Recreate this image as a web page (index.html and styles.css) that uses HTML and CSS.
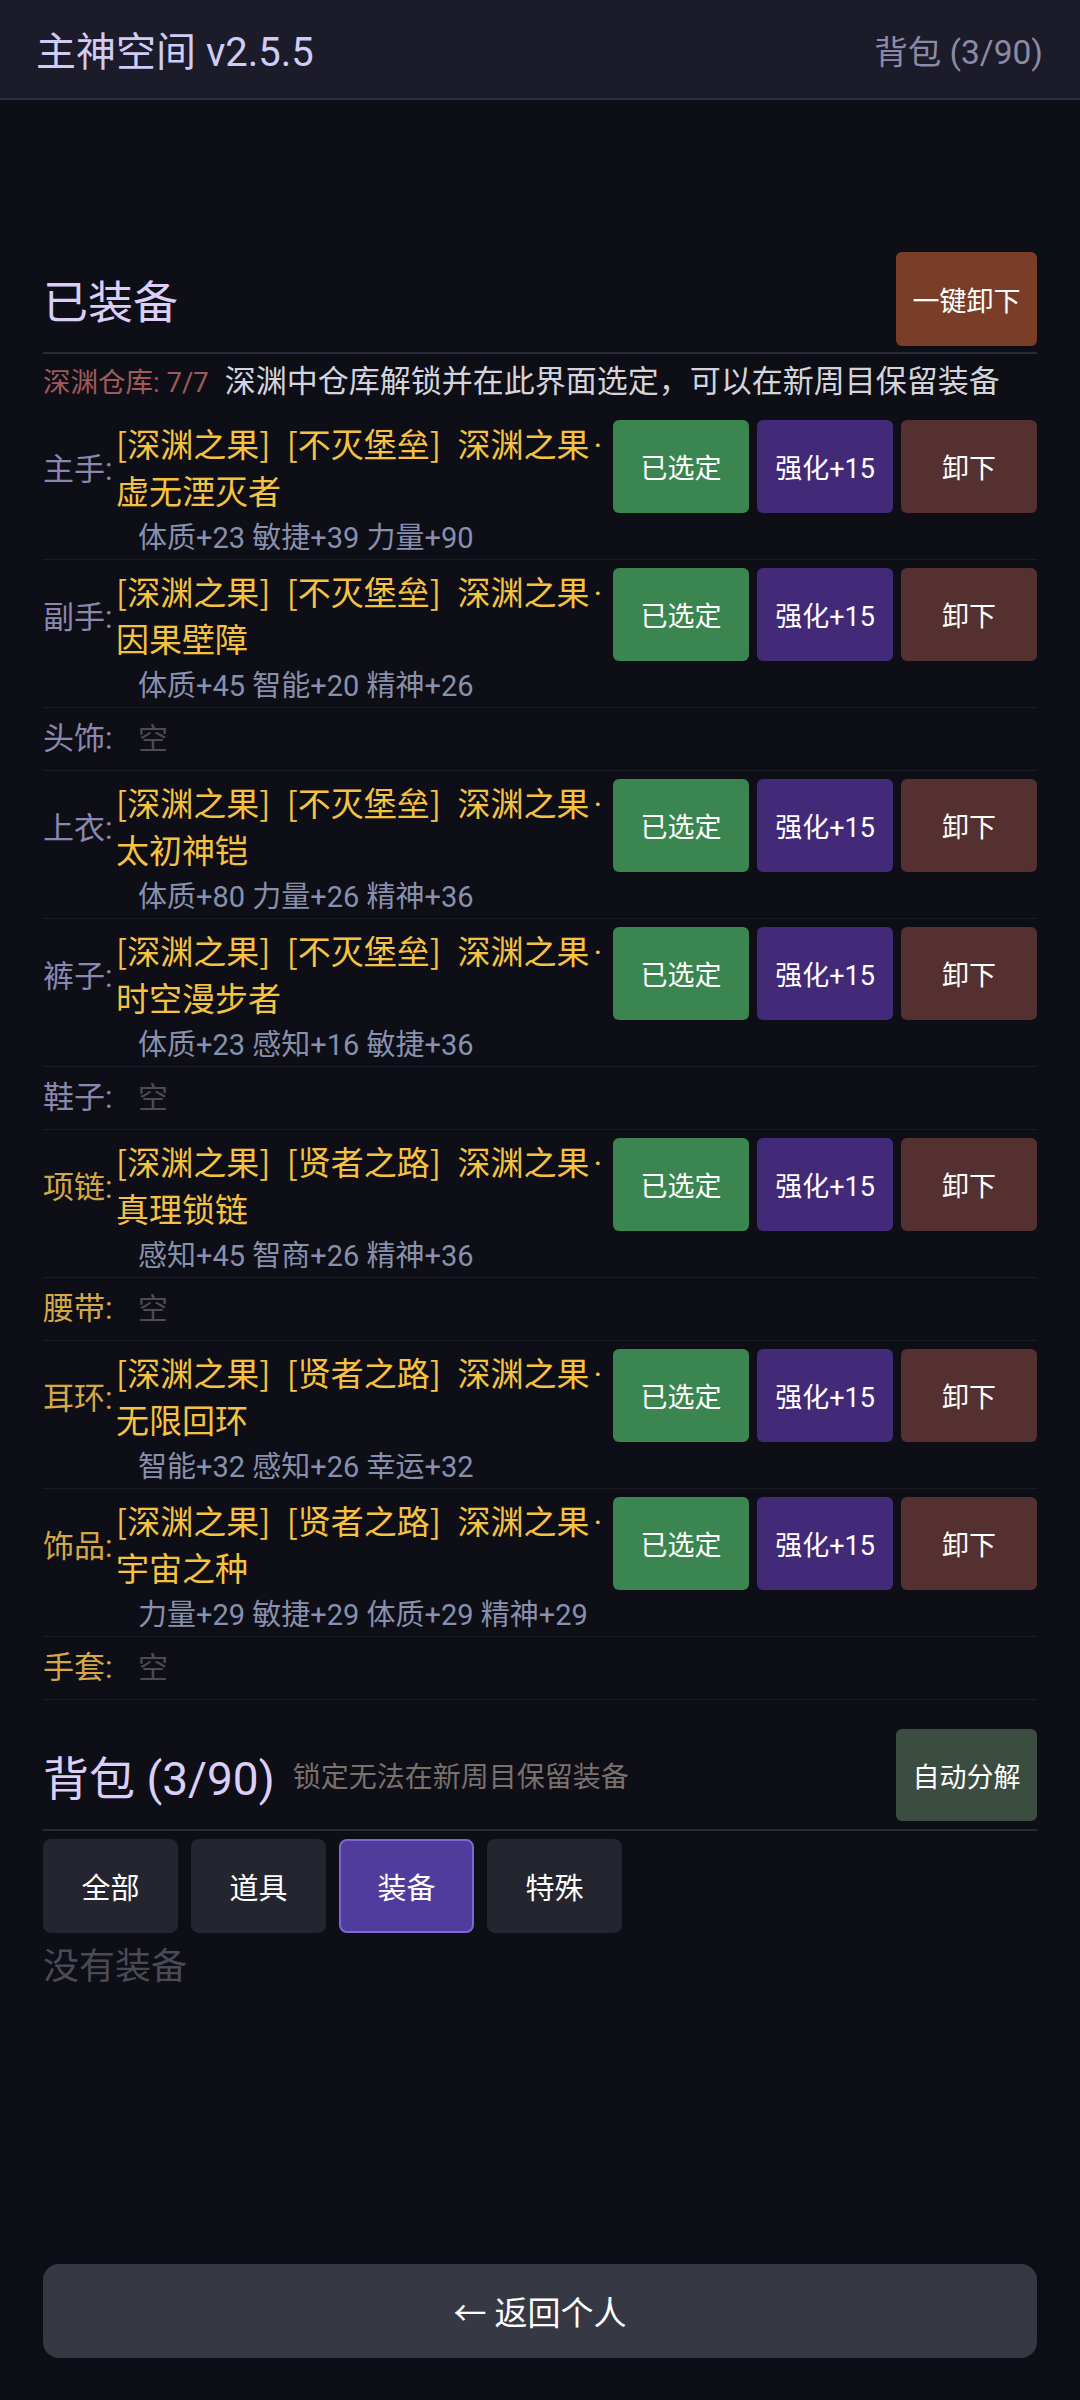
FILE: index.html
```html
<!DOCTYPE html>
<html lang="zh-CN">
<head>
    <meta charset="UTF-8">
    <meta name="viewport" content="width=device-width, initial-scale=1.0">
    <title>主神空间</title>
    <link rel="stylesheet" href="styles.css">
</head>
<body>
    <header class="top-bar">
        <div class="app-title">主神空间 v2.5.5</div>
        <div class="bag-count">背包 (3/90)</div>
    </header>

    <main class="page">
        <section class="equipped">
            <div class="section-head">
                <h2>已装备</h2>
                <button class="btn btn-unequip-all">一键卸下</button>
            </div>
            <div class="abyss-info">
                <span class="abyss-count">深渊仓库: 7/7</span>
                <span class="abyss-tip">深渊中仓库解锁并在此界面选定，可以在新周目保留装备</span>
            </div>

            <div class="slot">
                <div class="slot-main">
                    <span class="slot-label">主手:</span>
                    <div class="item-name"><span>[深渊之果] [不灭堡垒] 深渊之果<span class="dot">·</span></span><span class="item-title">虚无湮灭者</span></div>
                    <div class="slot-actions">
                        <button class="btn btn-selected">已选定</button>
                        <button class="btn btn-enhance">强化+15</button>
                        <button class="btn btn-remove">卸下</button>
                    </div>
                </div>
                <div class="item-stats">体质+23 敏捷+39 力量+90</div>
            </div>

            <div class="slot">
                <div class="slot-main">
                    <span class="slot-label">副手:</span>
                    <div class="item-name"><span>[深渊之果] [不灭堡垒] 深渊之果<span class="dot">·</span></span><span class="item-title">因果壁障</span></div>
                    <div class="slot-actions">
                        <button class="btn btn-selected">已选定</button>
                        <button class="btn btn-enhance">强化+15</button>
                        <button class="btn btn-remove">卸下</button>
                    </div>
                </div>
                <div class="item-stats">体质+45 智能+20 精神+26</div>
            </div>

            <div class="slot slot-empty">
                <span class="slot-label">头饰:</span>
                <span class="empty-text">空</span>
            </div>

            <div class="slot">
                <div class="slot-main">
                    <span class="slot-label">上衣:</span>
                    <div class="item-name"><span>[深渊之果] [不灭堡垒] 深渊之果<span class="dot">·</span></span><span class="item-title">太初神铠</span></div>
                    <div class="slot-actions">
                        <button class="btn btn-selected">已选定</button>
                        <button class="btn btn-enhance">强化+15</button>
                        <button class="btn btn-remove">卸下</button>
                    </div>
                </div>
                <div class="item-stats">体质+80 力量+26 精神+36</div>
            </div>

            <div class="slot">
                <div class="slot-main">
                    <span class="slot-label">裤子:</span>
                    <div class="item-name"><span>[深渊之果] [不灭堡垒] 深渊之果<span class="dot">·</span></span><span class="item-title">时空漫步者</span></div>
                    <div class="slot-actions">
                        <button class="btn btn-selected">已选定</button>
                        <button class="btn btn-enhance">强化+15</button>
                        <button class="btn btn-remove">卸下</button>
                    </div>
                </div>
                <div class="item-stats">体质+23 感知+16 敏捷+36</div>
            </div>

            <div class="slot slot-empty">
                <span class="slot-label">鞋子:</span>
                <span class="empty-text">空</span>
            </div>

            <div class="slot">
                <div class="slot-main">
                    <span class="slot-label gold">项链:</span>
                    <div class="item-name"><span>[深渊之果] [贤者之路] 深渊之果<span class="dot">·</span></span><span class="item-title">真理锁链</span></div>
                    <div class="slot-actions">
                        <button class="btn btn-selected">已选定</button>
                        <button class="btn btn-enhance">强化+15</button>
                        <button class="btn btn-remove">卸下</button>
                    </div>
                </div>
                <div class="item-stats">感知+45 智商+26 精神+36</div>
            </div>

            <div class="slot slot-empty">
                <span class="slot-label gold">腰带:</span>
                <span class="empty-text">空</span>
            </div>

            <div class="slot">
                <div class="slot-main">
                    <span class="slot-label gold">耳环:</span>
                    <div class="item-name"><span>[深渊之果] [贤者之路] 深渊之果<span class="dot">·</span></span><span class="item-title">无限回环</span></div>
                    <div class="slot-actions">
                        <button class="btn btn-selected">已选定</button>
                        <button class="btn btn-enhance">强化+15</button>
                        <button class="btn btn-remove">卸下</button>
                    </div>
                </div>
                <div class="item-stats">智能+32 感知+26 幸运+32</div>
            </div>

            <div class="slot">
                <div class="slot-main">
                    <span class="slot-label gold">饰品:</span>
                    <div class="item-name"><span>[深渊之果] [贤者之路] 深渊之果<span class="dot">·</span></span><span class="item-title">宇宙之种</span></div>
                    <div class="slot-actions">
                        <button class="btn btn-selected">已选定</button>
                        <button class="btn btn-enhance">强化+15</button>
                        <button class="btn btn-remove">卸下</button>
                    </div>
                </div>
                <div class="item-stats">力量+29 敏捷+29 体质+29 精神+29</div>
            </div>

            <div class="slot slot-empty">
                <span class="slot-label gold">手套:</span>
                <span class="empty-text">空</span>
            </div>
        </section>

        <section class="bag">
            <div class="section-head bag-head">
                <div class="bag-title">
                    <h2>背包 (3/90)</h2>
                    <span class="bag-note">锁定无法在新周目保留装备</span>
                </div>
                <button class="btn btn-decompose">自动分解</button>
            </div>
            <div class="tabs">
                <button class="tab">全部</button>
                <button class="tab">道具</button>
                <button class="tab active">装备</button>
                <button class="tab">特殊</button>
            </div>
            <div class="bag-empty">没有装备</div>
        </section>
    </main>

    <footer class="bottom">
        <button class="btn btn-back">← 返回个人</button>
    </footer>
</body>
</html>
```

FILE: styles.css
```css
* {
    box-sizing: border-box;
}
body {
    font-family: Roboto, "Noto Sans CJK SC", sans-serif;
    background-color: #0e0e16;
    color: #d0d0d8;
    margin: 0;
    padding: 0;
    display: flex;
    flex-direction: column;
    min-height: 100vh;
}
.top-bar {
    height: 100px;
    padding: 0 37px 0 36px;
    display: flex;
    align-items: center;
    justify-content: space-between;
    background-color: #1b1b29;
    border-bottom: 2px solid #2c2c40;
}
.app-title {
    font-size: 40px;
    color: #cfcdf5;
}
.bag-count {
    font-size: 33.5px;
    color: #8c8aa6;
}
.page {
    flex: 1;
    padding: 152px 43px 0;
}
.btn {
    font-family: inherit;
    border: none;
    color: #fff;
    border-radius: 6px;
    cursor: pointer;
    padding: 0;
}
.section-head {
    display: flex;
    align-items: center;
    justify-content: space-between;
    padding-bottom: 6px;
    border-bottom: 2px solid #2a2a3c;
}
.section-head h2 {
    margin: 0;
    font-size: 45px;
    font-weight: normal;
    color: #dccff7;
}
.btn-unequip-all {
    width: 141px;
    height: 94px;
    background-color: #7a3e28;
    font-size: 27px;
}
.abyss-info {
    padding: 9px 0 6px;
    line-height: 38px;
}
.abyss-count {
    font-size: 27.5px;
    color: #a05a5a;
    margin-right: 12px;
}
.abyss-tip {
    font-size: 31px;
    color: #d4d4dc;
}
.slot {
    padding: 8px 0 1px;
    border-bottom: 1px solid #1b1b27;
}
.slot-main {
    display: flex;
    align-items: center;
}
.slot-label {
    width: 73px;
    flex-shrink: 0;
    white-space: nowrap;
    font-size: 31px;
    color: #8a88b0;
}
.slot-label.gold {
    color: #d4a848;
}
.item-name {
    flex: 1;
    font-family: "Noto Sans CJK SC", sans-serif;
    font-size: 33px;
    line-height: 45px;
    word-spacing: 9px;
    color: #f5c242;
    white-space: nowrap;
}
.item-name .dot {
    font-family: Roboto, sans-serif;
    margin-left: 4px;
}
.item-title {
    display: block;
}
.slot-actions {
    display: flex;
    gap: 8px;
    margin-left: 8px;
}
.slot-actions .btn {
    width: 136px;
    height: 93px;
    font-size: 27px;
}
.btn-selected {
    background-color: #3a8550;
}
.btn-enhance {
    background-color: #432a78;
}
.btn-remove {
    background-color: #543030;
}
.item-stats {
    margin: 5px 0 0 95px;
    font-size: 29px;
    line-height: 40px;
    color: #8890ad;
}
.slot-empty {
    display: flex;
    align-items: center;
    padding: 8px 0;
    line-height: 46px;
}
.empty-text {
    margin-left: 22px;
    font-size: 30px;
    color: #4b4b55;
}
.bag {
    margin-top: 29px;
}
.bag-head {
    padding-bottom: 8px;
}
.bag-title {
    display: flex;
    align-items: center;
}
.bag-title h2 {
    font-size: 46px;
}
.bag-note {
    margin-left: 18px;
    font-size: 28px;
    color: #7a706d;
}
.btn-decompose {
    width: 141px;
    height: 92px;
    background-color: #3b4c40;
    font-size: 27px;
}
.tabs {
    display: flex;
    gap: 13px;
    margin-top: 8px;
}
.tab {
    width: 135px;
    height: 94px;
    border: 2px solid transparent;
    border-radius: 8px;
    background-color: #25252f;
    color: #fff;
    font-family: inherit;
    font-size: 29px;
    cursor: pointer;
}
.tab.active {
    background-color: #503c9c;
    border-color: #7d67d4;
}
.bag-empty {
    margin-top: 9px;
    font-size: 36px;
    line-height: 50px;
    color: #4a4a54;
}
.bottom {
    padding: 0 43px 42px;
}
.btn-back {
    width: 100%;
    height: 94px;
    border-radius: 16px;
    background-color: #363944;
    font-size: 33px;
}
```
